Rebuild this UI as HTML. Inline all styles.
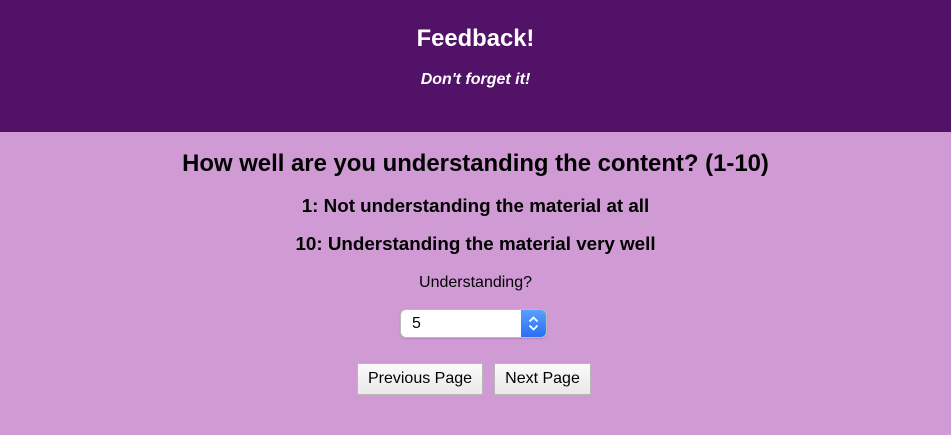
<!DOCTYPE html>
<html><head><style>
*{margin:0;padding:0;box-sizing:border-box}
body{width:951px;height:435px;background:#d09ad5;font-family:"Liberation Sans",Arial,sans-serif;color:#000;text-align:center;overflow:hidden}
.hdr{background:#511268;height:132px;color:#fff;position:relative}
.t{position:absolute;left:0;right:0;top:25px;font-size:23.8px;font-weight:bold}
.s{position:absolute;left:0;right:0;top:71px;font-size:16px;font-weight:bold;font-style:italic}
.a{position:absolute;left:0;right:0}
.sel{position:absolute;left:401px;top:310px;width:145px;height:27px;background:#fff;border-radius:5px;box-shadow:0 0 0 1px #bbb,0 1px 2px rgba(0,0,0,.3);text-align:left;font-size:16px;padding:5px 0 0 11px}
.arr{position:absolute;right:0;top:0;width:25px;height:27px;background:linear-gradient(#5aa0fb,#2a6ff5);border-radius:0 5px 5px 0}
.btn{position:absolute;top:363px;height:32px;background:linear-gradient(#fafafa,#e9e9e9);border:1px solid #b8b8b8;font-size:16px;padding-top:6px}
</style></head><body>
<div class="hdr"><div class="t">Feedback!</div><div class="s">Don't forget it!</div></div>
<div class="a" style="top:150px;font-size:23.9px;font-weight:bold">How well are you understanding the content? (1-10)</div>
<div class="a" style="top:195px;font-size:18.8px;font-weight:bold">1: Not understanding the material at all</div>
<div class="a" style="top:233px;font-size:18.8px;font-weight:bold">10: Understanding the material very well</div>
<div class="a" style="top:274px;font-size:16px">Understanding?</div>
<div class="sel">5<div class="arr"><svg width="25" height="27" viewBox="0 0 25 27"><path d="M8.5 11.5l4-4 4 4M8.5 15.5l4 4 4-4" stroke="#fff" stroke-width="1.8" fill="none"/></svg></div></div>
<div class="btn" style="left:357px;width:126px">Previous Page</div>
<div class="btn" style="left:494px;width:97px">Next Page</div>
</body></html>
